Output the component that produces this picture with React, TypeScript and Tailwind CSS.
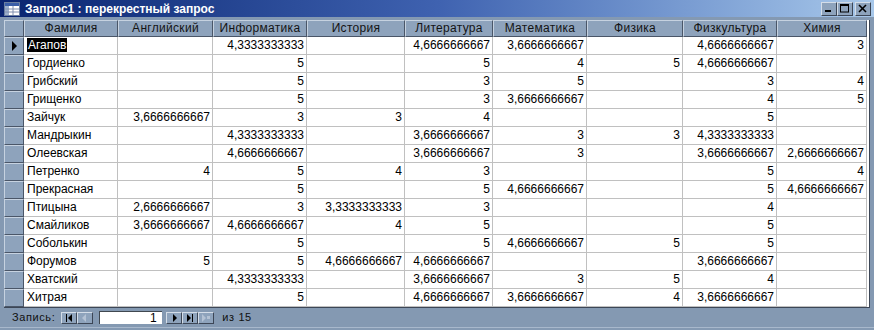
import React from "react";

type Col = { title: string; w: string };

// колонки перекрестного запроса
const cols: Col[] = [
  { title: "Фамилия", w: "w-[94px]" },
  { title: "Английский", w: "w-[95px]" },
  { title: "Информатика", w: "w-[94px]" },
  { title: "История", w: "w-[98px]" },
  { title: "Литература", w: "w-[88px]" },
  { title: "Математика", w: "w-[94px]" },
  { title: "Физика", w: "w-[96px]" },
  { title: "Физкультура", w: "w-[94px]" },
  { title: "Химия", w: "w-[90px]" },
];

const A = "4,3333333333";
const B = "4,6666666667";
const C = "3,6666666667";
const D = "2,6666666667";
const E = "3,3333333333";

const rows: string[][] = [
  ["Агапов", "", A, "", B, C, "", B, "3"],
  ["Гордиенко", "", "5", "", "5", "4", "5", B, ""],
  ["Грибский", "", "5", "", "3", "5", "", "3", "4"],
  ["Грищенко", "", "5", "", "3", C, "", "4", "5"],
  ["Зайчук", C, "3", "3", "4", "", "", "5", ""],
  ["Мандрыкин", "", A, "", C, "3", "3", A, ""],
  ["Олеевская", "", B, "", C, "3", "", C, D],
  ["Петренко", "4", "5", "4", "3", "", "", "5", "4"],
  ["Прекрасная", "", "5", "", "5", B, "", "5", B],
  ["Птицына", D, "3", E, "3", "", "", "4", ""],
  ["Смайликов", C, B, "4", "5", "", "", "5", ""],
  ["Соболькин", "", "5", "", "5", B, "5", "5", ""],
  ["Форумов", "5", "5", B, B, "", "", C, ""],
  ["Хватский", "", A, "", C, "3", "5", "4", ""],
  ["Хитрая", "", "5", "", B, C, "4", C, ""],
];

function TitleIcon() {
  return (
    <svg width="16" height="14" viewBox="0 0 16 14">
      <rect x="0.5" y="0.5" width="15" height="13" fill="#ffffff" stroke="#6b7fa0" />
      <rect x="1" y="1" width="14" height="3" fill="#3a5ea8" />
      <rect x="1" y="4" width="4" height="9" fill="#9db0cc" />
      <line x1="1" y1="7" x2="15" y2="7" stroke="#8090b0" />
      <line x1="1" y1="10" x2="15" y2="10" stroke="#8090b0" />
      <line x1="9" y1="4" x2="9" y2="13" stroke="#8090b0" />
    </svg>
  );
}

function CapButton({ kind }: { kind: "min" | "max" | "close" }) {
  return (
    <div className="w-[16px] h-[14px] bg-[#8ea3bc] border-t border-l border-t-[#d4dde8] border-l-[#d4dde8] border-b border-r border-b-[#3c4656] border-r-[#3c4656] flex items-center justify-center">
      <svg width="10" height="9" viewBox="0 0 10 9">
        {kind === "min" && <rect x="1" y="6" width="6" height="2" fill="#000" />}
        {kind === "max" && (
          <g fill="none" stroke="#000">
            <rect x="0.5" y="0.5" width="8" height="7.5" />
            <line x1="0.5" y1="1.5" x2="8.5" y2="1.5" />
          </g>
        )}
        {kind === "close" && (
          <g stroke="#000" strokeWidth="1.6">
            <line x1="1" y1="1" x2="8" y2="8" />
            <line x1="8" y1="1" x2="1" y2="8" />
          </g>
        )}
      </svg>
    </div>
  );
}

function NavButton({ kind, disabled }: { kind: "first" | "prev" | "next" | "last" | "new"; disabled?: boolean }) {
  const c = disabled ? "#b4c2d4" : "#000";
  return (
    <div className="w-[16px] h-[12px] bg-[#8ea3bc] border-t border-l border-t-[#d4dde8] border-l-[#d4dde8] border-b border-r border-b-[#3c4656] border-r-[#3c4656] flex items-center justify-center">
      <svg width="10" height="8" viewBox="0 0 10 8">
        {kind === "first" && (
          <g fill={c}>
            <rect x="2" y="0" width="1" height="8" />
            <polygon points="8,0 8,8 4,4" />
          </g>
        )}
        {kind === "prev" && <polygon points="6,0 6,8 2,4" fill={c} />}
        {kind === "next" && <polygon points="4,0 4,8 8,4" fill={c} />}
        {kind === "last" && (
          <g fill={c}>
            <polygon points="2,0 2,8 6,4" />
            <rect x="7" y="0" width="1" height="8" />
          </g>
        )}
        {kind === "new" && (
          <g fill={c}>
            <polygon points="1,0 1,8 5,4" />
            <rect x="6" y="2" width="3" height="3" />
          </g>
        )}
      </svg>
    </div>
  );
}

function HeaderRow() {
  return (
    <div className="flex h-[17px]">
      <div className="w-[20px] shrink-0 bg-[#8ea3bc] border-t border-l border-t-[#c6d2e0] border-l-[#c6d2e0] border-b border-r border-b-[#4a5668] border-r-[#4a5668]" />
      {cols.map((c) => (
        <div
          key={c.title}
          className={`${c.w} shrink-0 bg-[#8ea3bc] border-t border-l border-t-[#c6d2e0] border-l-[#c6d2e0] border-b border-r border-b-[#4a5668] border-r-[#4a5668] text-center text-[12px] leading-[15px] tracking-[0.3px] text-[#141414]`}
        >
          {c.title}
        </div>
      ))}
    </div>
  );
}

function DataRow({ cells, current }: { cells: string[]; current: boolean }) {
  return (
    <div className="flex h-[18px]">
      <div className="w-[20px] shrink-0 bg-[#8ea3bc] border-t border-l border-t-[#c6d2e0] border-l-[#c6d2e0] border-b border-r border-b-[#4a5668] border-r-[#4a5668] flex items-center justify-center">
        {current && (
          <svg width="7" height="10" viewBox="0 0 7 10">
            <polygon points="1,0 1,10 6,5" fill="#000" />
          </svg>
        )}
      </div>
      {cells.map((v, i) => (
        <div
          key={i}
          className={`${cols[i].w} shrink-0 border-b border-r border-[#c0c0c0] text-[12px] leading-[17px] text-black whitespace-nowrap overflow-hidden ${
            i === 0 ? "text-left pl-[3px]" : "text-right pr-[2px]"
          }`}
        >
          {i === 0 && current ? <span className="bg-black text-white px-[1px]">{v}</span> : v}
        </div>
      ))}
    </div>
  );
}

export default function App() {
  return (
    <div className="w-[874px] h-[330px] bg-[#8499b2] flex flex-col overflow-hidden font-['Liberation_Sans',Arial,sans-serif]">
      {/* заголовок окна */}
      <div className="h-[17px] flex items-center bg-gradient-to-r from-[#0a2470] via-[#3f62b0] to-[#a8c8ea]">
        <div className="ml-[4px]">
          <TitleIcon />
        </div>
        <span className="ml-[5px] text-white font-bold text-[12px] leading-none">
          Запрос1 : перекрестный запрос
        </span>
        <div className="ml-auto mr-[3px] flex items-center">
          <CapButton kind="min" />
          <CapButton kind="max" />
          <div className="ml-[2px]">
            <CapButton kind="close" />
          </div>
        </div>
      </div>

      {/* таблица */}
      <div className="pt-[3px] pl-[4px]">
        <div className="w-[866px] h-[288px] bg-white border-r border-b border-[#3c4656] overflow-hidden">
          <HeaderRow />
          {rows.map((r, i) => (
            <DataRow key={r[0]} cells={r} current={i === 0} />
          ))}
        </div>
      </div>

      {/* навигация по записям */}
      <div className="h-[19px] flex items-center pl-[12px] text-[11px] tracking-[0.6px] text-[#101010]">
        <span>Запись:</span>
        <div className="ml-[6px] flex">
          <NavButton kind="first" />
          <NavButton kind="prev" disabled />
        </div>
        <div className="ml-[6px] w-[63px] h-[13px] bg-white border-t border-l border-[#404850] text-right pr-[5px] text-[12px] leading-[12px] text-black">
          1
        </div>
        <div className="ml-[4px] flex">
          <NavButton kind="next" />
          <NavButton kind="last" />
          <NavButton kind="new" disabled />
        </div>
        <span className="ml-[8px]">из 15</span>
      </div>
      <div className="flex-1 border-t border-[#a8b8cc]" />
    </div>
  );
}
